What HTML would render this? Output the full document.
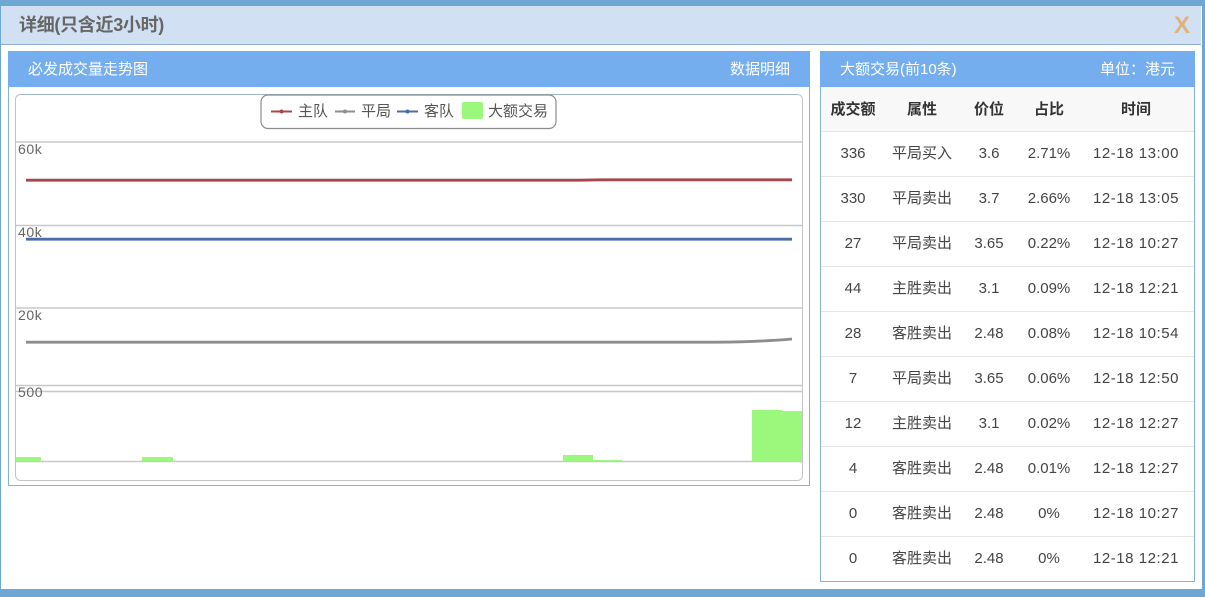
<!DOCTYPE html>
<html lang="zh"><head><meta charset="utf-8"><title>详细</title>
<style>
html,body{margin:0;padding:0;width:1205px;height:597px;overflow:hidden;background:#fff}
body{position:relative;font-family:"Liberation Sans","Noto Sans CJK SC",sans-serif;color:#444}
.a{position:absolute;box-sizing:border-box}
.c{position:absolute;transform:translateX(-50%);white-space:nowrap;font-size:15px;line-height:20px;color:#444}
.d{letter-spacing:.55px}
.h{position:absolute;font-size:15px;line-height:20px;color:#fff;white-space:nowrap}
.b{font-weight:bold;color:#333}
.line{position:absolute;left:821px;width:373px;height:1px;background:#e6e6e6}
</style></head><body>
<div class="a" style="left:0;top:0;width:1205px;height:6px;background:#6fa7d4"></div>
<div class="a" style="left:0;top:0;width:1px;height:597px;background:#6fa7d4"></div>
<div class="a" style="left:1202px;top:0;width:3px;height:597px;background:#6fa7d4"></div>
<div class="a" style="left:0;top:589px;width:1205px;height:8px;background:#6fa7d4"></div>
<div class="a" style="left:1px;top:6px;width:1200px;height:39px;background:#d2e0f3;border-bottom:1px solid #8fabcd"></div>
<div class="a" style="left:19px;top:13px;font-size:18px;line-height:25px;font-weight:bold;color:#666;letter-spacing:-.3px;white-space:nowrap">详细(只含近3小时)</div>
<div class="a" style="left:1174px;top:12px;font-size:24px;line-height:28px;font-weight:bold;color:#e3b27c">X</div>

<div class="a" style="left:8px;top:51px;width:802px;height:435px;border:1px solid #7fb5d8;border-top:0"></div>
<div class="a" style="left:8px;top:51px;width:802px;height:36px;background:#74aeef"></div>
<div class="h" style="left:28px;top:60px">必发成交量走势图</div>
<div class="h" style="left:730px;top:60px">数据明细</div>

<div class="a" style="left:820px;top:51px;width:375px;height:531px;border:1px solid #7fb5d8;border-top:0"></div>
<div class="a" style="left:820px;top:51px;width:375px;height:36px;background:#74aeef"></div>
<div class="h" style="left:840px;top:60px">大额交易(前10条)</div>
<div class="h" style="left:1100px;top:60px">单位：港元</div>
<div class="a" style="left:821px;top:87px;width:373px;height:44px;background:#f8f8f8"></div>

<svg class="a" style="left:0;top:0" width="1205" height="597" viewBox="0 0 1205 597">
<rect x="15.5" y="94.5" width="787" height="386" rx="5" fill="#fff" stroke="#c4c4c4"/>
<path d="M20 94.5H798" stroke="#9db4cc"/>
<g stroke="#c8c8c8" stroke-width="1.5" fill="none">
<path d="M16 142H802M16 225.500H802M16 308H802M16 385.500H802M16 391.500H802M16 461.500H802"/>
</g>
<path d="M26 180.200H580L600 179.800H792" stroke="#a8474a" stroke-width="2.800" fill="none"/>
<path d="M26 239.200H792" stroke="#4a6fa8" stroke-width="2.800" fill="none"/>
<path d="M26 342.200H716Q760 341.800 792 339" stroke="#8e8e8e" stroke-width="2.800" fill="none"/>
<g fill="#9bf87d">
<rect x="16" y="457" width="25" height="4"/>
<rect x="142" y="457" width="31" height="4"/>
<rect x="563" y="455" width="30" height="6"/>
<rect x="593" y="460" width="29" height="1"/>
<rect x="752" y="410" width="30" height="51"/>
<rect x="782" y="411" width="20" height="50"/>
</g>
<g font-family="Liberation Sans,DejaVu Sans,sans-serif" font-size="14" fill="#666" letter-spacing=".6">
<text x="18" y="154">60k</text><text x="18" y="237">40k</text><text x="18" y="320">20k</text><text x="18" y="397">500</text>
</g>
<rect x="261" y="95" width="295" height="33.500" rx="7" fill="#fff" stroke="#8d8d8d" stroke-width="1.200"/>
<path d="M271 111.500H292" stroke="#a8474a" stroke-width="2"/><circle cx="281.500" cy="111.500" r="2" fill="#a8474a"/>
<path d="M335 111.500H355" stroke="#8e8e8e" stroke-width="2"/><circle cx="345" cy="111.500" r="2" fill="#8e8e8e"/>
<path d="M397 111.500H418" stroke="#4a6fa8" stroke-width="2"/><circle cx="407.500" cy="111.500" r="2" fill="#4a6fa8"/>
<rect x="462" y="102" width="21" height="17" rx="2" fill="#9bf87d"/>
<g font-family="Liberation Sans,Noto Sans CJK SC,sans-serif" font-size="15" fill="#555">
<text x="298" y="116">主队</text><text x="361" y="116">平局</text><text x="424" y="116">客队</text><text x="488" y="116">大额交易</text>
</g>
</svg>

<div class="line" style="top:131px"></div><div class="line" style="top:176px"></div><div class="line" style="top:221px"></div><div class="line" style="top:266px"></div><div class="line" style="top:311px"></div><div class="line" style="top:356px"></div><div class="line" style="top:401px"></div><div class="line" style="top:446px"></div><div class="line" style="top:491px"></div><div class="line" style="top:536px"></div>

<div class="c b" style="left:853px;top:100px">成交额</div><div class="c b" style="left:922px;top:100px">属性</div><div class="c b" style="left:989px;top:100px">价位</div><div class="c b" style="left:1049px;top:100px">占比</div><div class="c b" style="left:1136px;top:100px">时间</div>

<div class="c" style="left:853px;top:144px">336</div><div class="c" style="left:922px;top:144px">平局买入</div><div class="c" style="left:989px;top:144px">3.6</div><div class="c" style="left:1049px;top:144px">2.71%</div><div class="c d" style="left:1136px;top:144px">12-18 13:00</div>
<div class="c" style="left:853px;top:189px">330</div><div class="c" style="left:922px;top:189px">平局卖出</div><div class="c" style="left:989px;top:189px">3.7</div><div class="c" style="left:1049px;top:189px">2.66%</div><div class="c d" style="left:1136px;top:189px">12-18 13:05</div>
<div class="c" style="left:853px;top:234px">27</div><div class="c" style="left:922px;top:234px">平局卖出</div><div class="c" style="left:989px;top:234px">3.65</div><div class="c" style="left:1049px;top:234px">0.22%</div><div class="c d" style="left:1136px;top:234px">12-18 10:27</div>
<div class="c" style="left:853px;top:279px">44</div><div class="c" style="left:922px;top:279px">主胜卖出</div><div class="c" style="left:989px;top:279px">3.1</div><div class="c" style="left:1049px;top:279px">0.09%</div><div class="c d" style="left:1136px;top:279px">12-18 12:21</div>
<div class="c" style="left:853px;top:324px">28</div><div class="c" style="left:922px;top:324px">客胜卖出</div><div class="c" style="left:989px;top:324px">2.48</div><div class="c" style="left:1049px;top:324px">0.08%</div><div class="c d" style="left:1136px;top:324px">12-18 10:54</div>
<div class="c" style="left:853px;top:369px">7</div><div class="c" style="left:922px;top:369px">平局卖出</div><div class="c" style="left:989px;top:369px">3.65</div><div class="c" style="left:1049px;top:369px">0.06%</div><div class="c d" style="left:1136px;top:369px">12-18 12:50</div>
<div class="c" style="left:853px;top:414px">12</div><div class="c" style="left:922px;top:414px">主胜卖出</div><div class="c" style="left:989px;top:414px">3.1</div><div class="c" style="left:1049px;top:414px">0.02%</div><div class="c d" style="left:1136px;top:414px">12-18 12:27</div>
<div class="c" style="left:853px;top:459px">4</div><div class="c" style="left:922px;top:459px">客胜卖出</div><div class="c" style="left:989px;top:459px">2.48</div><div class="c" style="left:1049px;top:459px">0.01%</div><div class="c d" style="left:1136px;top:459px">12-18 12:27</div>
<div class="c" style="left:853px;top:504px">0</div><div class="c" style="left:922px;top:504px">客胜卖出</div><div class="c" style="left:989px;top:504px">2.48</div><div class="c" style="left:1049px;top:504px">0%</div><div class="c d" style="left:1136px;top:504px">12-18 10:27</div>
<div class="c" style="left:853px;top:549px">0</div><div class="c" style="left:922px;top:549px">客胜卖出</div><div class="c" style="left:989px;top:549px">2.48</div><div class="c" style="left:1049px;top:549px">0%</div><div class="c d" style="left:1136px;top:549px">12-18 12:21</div>
</body></html>
